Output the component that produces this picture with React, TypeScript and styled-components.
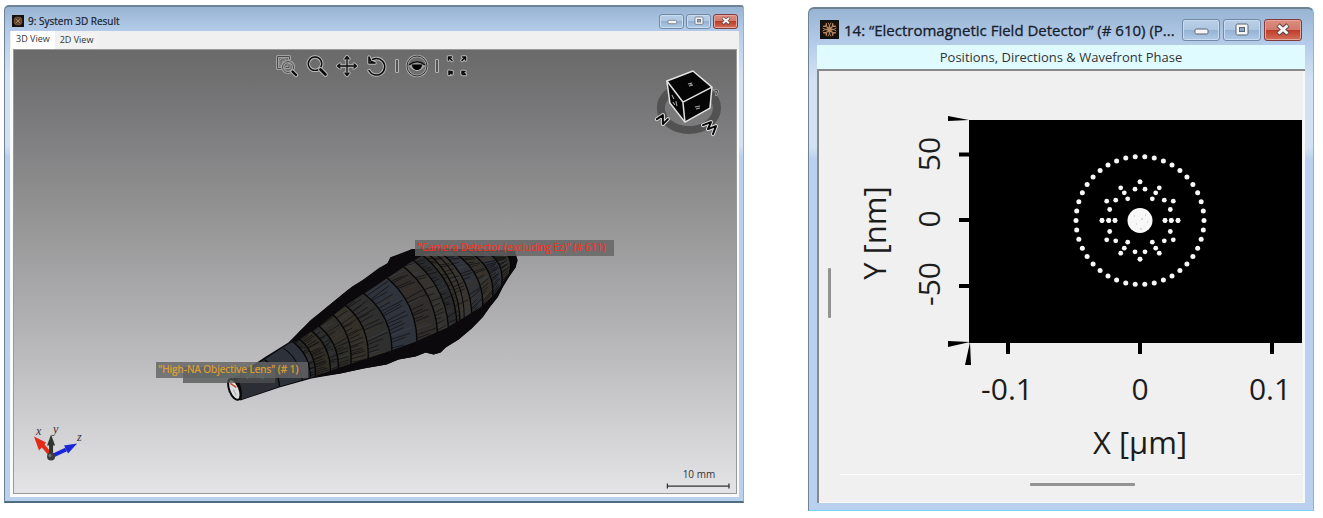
import React from 'react';
import styled, { createGlobalStyle } from 'styled-components';

const ui = '"Open Sans", "Noto Sans", sans-serif';

const GlobalStyle = createGlobalStyle`
  *, *::before, *::after { box-sizing: border-box; }
  body { margin: 0; background: #fff; font-family: ${ui}; color: #222; }
  svg { display: block; }
`;

const Desktop = styled.main`
  display: grid;
  grid-template-columns: minmax(0, 740fr) minmax(0, 506fr);
  column-gap: 64px;
  align-items: start;
  padding: 5px 9px 6px 4px;
`;

const Frame = styled.section<{ $large?: boolean }>`
  display: flex;
  flex-direction: column;
  margin-top: ${(p) => (p.$large ? 2 : 0)}px;
  padding: ${(p) => (p.$large ? '0 8px 7px' : '0 4px 4px 5px')};
  border: 1px solid #6f8296;
  border-top-width: 2px;
  border-right-color: #66c3e6;
  border-bottom: ${(p) => (p.$large ? '1px solid #7ed3f2' : '2px solid #4f6d80')};
  border-radius: ${(p) => (p.$large ? '6px 6px 0 0' : '5px 3px 0 0')};
  background: linear-gradient(#98b4d3 0, #b5cdea ${(p) => (p.$large ? 36 : 25)}px, #d3e2f3 70px, #d3e2f3 138px, #b9d1ee 150px);
`;

const TitleBar = styled.header<{ $large?: boolean }>`
  display: flex;
  align-items: center;
  gap: ${(p) => (p.$large ? 5 : 4)}px;
  height: ${(p) => (p.$large ? 36 : 24)}px;
  padding: ${(p) => (p.$large ? '5px 3px 0 3px' : '4px 1px 0 2px')};
`;

const Title = styled.h1<{ $large?: boolean }>`
  flex: 1;
  min-width: 0;
  margin: 0;
  overflow: hidden;
  white-space: nowrap;
  text-overflow: ellipsis;
  font-size: ${(p) => (p.$large ? 15 : 10)}px;
  line-height: ${(p) => (p.$large ? 24 : 16)}px;
  font-weight: 400;
  color: #15202c;
  -webkit-text-stroke: ${(p) => (p.$large ? '0.3px' : '0.2px')} #15202c;
`;

const Controls = styled.div<{ $large?: boolean }>`
  display: flex;
  gap: ${(p) => (p.$large ? 3 : 2)}px;
`;

const ControlButton = styled.button<{ $large?: boolean; $danger?: boolean }>`
  display: grid;
  place-items: center;
  width: ${(p) => (p.$large ? 38 : 25)}px;
  height: ${(p) => (p.$large ? 22 : 15)}px;
  padding: 0;
  border: 1px solid ${(p) => (p.$danger ? '#823a3a' : '#7189a6')};
  border-radius: 3px;
  box-shadow: inset 0 0 0 1px ${(p) => (p.$danger ? '#e2a79d' : '#c9dcf0')};
  background: ${(p) =>
    p.$danger
      ? 'linear-gradient(#dd8d7f 0, #d0796b 50%, #bd3b28 50%, #d4705a 100%)'
      : 'linear-gradient(#b9cee7 0, #aec6e0 50%, #94b1d2 50%, #b0cae6 100%)'};
`;

const Tabs = styled.div`
  display: flex;
  align-items: flex-end;
  height: 18px;
  padding-left: 1px;
  background: #f0f0f0;
`;

const Tab = styled.button<{ $active?: boolean }>`
  height: ${(p) => (p.$active ? 18 : 16)}px;
  padding: 0 5px 2px;
  border: 0;
  background: ${(p) => (p.$active ? '#fff' : '#f2f2f2')};
  color: #333;
  font: 9px/14px ${ui};
`;

const ViewBorder = styled.div`
  padding: 0 2px 3px 3px;
  background: #fafafa;
`;

const Viewport = styled.div`
  position: relative;
  border: 1px solid #9a9a9a;
  background: linear-gradient(#6a6a6a 0, #767577 12%, #929293 36%, #b3b2b4 63%, #cfced0 84%, #e4e3e6 100%);
`;

const ToolRow = styled.div`
  position: absolute;
  top: 4px;
  left: 0;
  right: 6px;
  display: flex;
  justify-content: center;
  gap: 6px;
`;

const ToolButton = styled.button`
  width: 24px;
  height: 24px;
  padding: 0;
  border: 0;
  background: none;
`;

const Separator = styled.span`
  width: 4px;
  height: 14px;
  margin-top: 5px;
  border: 1px solid #b5b5b5;
  border-radius: 1px;
  background: #555;
`;

const SceneLabel = styled.span<{ $x: number; $y: number; $w: number; $color: string; $dim?: boolean }>`
  position: absolute;
  left: ${(p) => p.$x}%;
  top: ${(p) => p.$y}%;
  width: ${(p) => p.$w}px;
  height: 16px;
  padding-left: ${(p) => (p.$dim ? 5 : 2)}px;
  white-space: nowrap;
  background: ${(p) => (p.$dim ? 'rgba(80,82,82,.75)' : 'rgba(100,100,100,.82)')};
  color: ${(p) => p.$color};
  font-size: ${(p) => (p.$dim ? 9 : 10)}px;
  line-height: 15px;
  -webkit-text-stroke: 0.2px ${(p) => p.$color};
`;

const Caption = styled.h2`
  height: 24px;
  margin: 0;
  background: #e0fbff;
  text-align: center;
  font-size: 13px;
  line-height: 24px;
  font-weight: 400;
  color: #333;
`;

const Panel = styled.div`
  display: grid;
  grid-template-columns: 21px minmax(0, 1fr);
  border: solid #888;
  border-width: 2px 0 0 2px;
  box-shadow: inset -2px -1px #f8f8f8;
  padding-right: 3px;
  background: #f0f0f0;
`;

const VerticalTrack = styled.div`
  display: flex;
  align-items: center;
  justify-content: center;
  grid-row: span 2;
  padding-top: 12px;
`;

const HorizontalTrack = styled.div`
  display: flex;
  justify-content: center;
  height: 29px;
  padding: 8px 0 0 22px;
  border-top: 1px solid #fff;
`;

const Thumb = styled.div<{ $vertical?: boolean }>`
  width: ${(p) => (p.$vertical ? 3 : 105)}px;
  height: ${(p) => (p.$vertical ? 50 : 3)}px;
  border-radius: 1px;
  background: #929292;
`;

function AppIcon({ size }: { size: number }) {
  return (
    <svg width={size} height={size} viewBox="0 0 18 18" aria-hidden="true">
      <rect width="18" height="18" fill="#14110f" />
      <g fill="none" stroke="#b9855a" strokeWidth="1.400">
        <path d="M9 5v8M5 9h8M6 6l6 6M12 6l-6 6" />
        <path d="M6 6V3M6 6H3M12 6V3M12 6h3M6 12v3M6 12H3M12 12v3M12 12h3" />
        <path d="M9 5L7.500 2.500M9 5l1.500-2.500M9 13l-1.500 2.500M9 13l1.500 2.500M5 9L2.500 7.500M5 9l-2.500 1.500M13 9l2.500-1.500M13 9l2.500 1.500" strokeWidth="0.900" />
      </g>
    </svg>
  );
}

function WindowControls({ large }: { large?: boolean }) {
  const size = large ? 18 : 12;
  return (
    <Controls $large={large}>
      <ControlButton type="button" $large={large} aria-label="Minimize">
        <svg width={size} height={size} viewBox="0 0 18 18">
          <rect x="3" y="8" width="13" height="5" rx="1.5" fill="#f4f4f4" stroke="#59646f" />
        </svg>
      </ControlButton>
      <ControlButton type="button" $large={large} aria-label="Maximize">
        <svg width={size} height={size} viewBox="0 0 18 18">
          <rect x="3" y="3" width="12" height="11" rx="1.5" fill="#f4f4f4" stroke="#59646f" />
          <rect x="6.5" y="6.5" width="5" height="4" fill="#8aa6c6" stroke="#59646f" />
        </svg>
      </ControlButton>
      <ControlButton type="button" $large={large} $danger aria-label="Close">
        <svg width={size} height={size} viewBox="0 0 18 18">
          <path d="M4 4l10 9M14 4L4 13" stroke="#5c4244" strokeWidth="5" />
          <path d="M4.5 4.5l9 8M13.5 4.5l-9 8" stroke="#f6f6f6" strokeWidth="3" />
        </svg>
      </ControlButton>
    </Controls>
  );
}

/* Each glyph is stroked twice: a pale halo first, then the dark line. */
function Haloed({ d, width = 1.4, soft }: { d: string; width?: number; soft?: boolean }) {
  return (
    <g fill="none" strokeLinecap="round" strokeLinejoin="round">
      <path d={d} stroke={soft ? '#a2a2a2' : '#b9b9b9'} strokeWidth={width + 2} />
      <path d={d} stroke={soft ? '#4c4c4c' : '#0a0a0a'} strokeWidth={width} />
    </g>
  );
}

const tools: { name: string; art: React.ReactNode }[] = [
  {
    name: 'Zoom to area',
    art: (
      <>
        <Haloed soft width={1} d="M7 14.500H2.500V2.500H14.500V5M6 11V6H10" />
        <Haloed soft width={1} d="M13 7.500a5.500 5.500 0 1 0 .1 0M11 13.500h3v-3" />
        <Haloed width={2.4} d="M17.500 17.500L21 21" />
      </>
    ),
  },
  {
    name: 'Zoom',
    art: (
      <>
        <Haloed d="M10 3a6.700 6.700 0 1 0 .1 0" />
        <Haloed width={2.6} d="M15.500 15.500L20.500 20.500" />
      </>
    ),
  },
  {
    name: 'Pan',
    art: <Haloed width={1.3} d="M12 3V21M3 12H21M10 5l2-2.500 2 2.500M10 19l2 2.500 2-2.500M5 10l-2.500 2 2.500 2M19 10l2.500 2-2.500 2" />,
  },
  {
    name: 'Rotate',
    art: (
      <>
        <Haloed width={1.5} d="M5 7.500a8.300 8.300 0 1 1-1 9" />
        <Haloed width={1.5} d="M4 3v6h6L6 7.500z" />
      </>
    ),
  },
  {
    name: 'View direction',
    art: (
      <>
        <circle cx="12" cy="12" r="10" fill="none" stroke="#a9a9a9" strokeWidth="2.600" />
        <circle cx="12" cy="12" r="10" fill="none" stroke="#333" strokeWidth="1" />
        <path d="M4 11.500q8-8 16 0q-8 10-16 0z" fill="#999" stroke="#bbb" />
        <path d="M4 11q8-6.500 16 0" fill="none" stroke="#111" strokeWidth="1.500" />
        <path d="M7 10.500h10a5 5.500 0 0 1-10 0z" fill="#000" />
      </>
    ),
  },
  {
    name: 'Fit to window',
    art: (
      <Haloed
        width={1.5}
        d="M3.500 6V3H6.500M3.500 3L7 6.500M17.500 3H20.500V6M20.500 3L17 6.500M4 17V20.500M7 17.500V20M4 20.500L7 17.500H4.500M17.500 20.500H20.500M17 20V17.500H20M17 17.500L20.500 20.500"
      />
    ),
  },
];

/* Cross-sections of the beam: [top x, top y, bottom x, bottom y, bulge]. */
const rings = [
  [237, 379, 241, 399, 4],
  [264, 359, 279, 386, 7],
  [292, 341, 310, 377, 9],
  [297, 337, 315, 376, 10],
  [308, 328, 330, 373, 12],
  [315, 323, 338, 371, 13],
  [329, 311, 350, 369, 15],
  [340, 301, 367, 366, 19],
  [356, 288, 391, 360, 22],
  [378, 271, 416, 354, 24],
  [396, 261, 437, 347, 24],
  [409, 257, 448, 341, 22],
  [421, 254, 456, 336, 21],
  [427, 253, 459, 333, 20],
  [440, 252, 471, 323, 18],
  [453, 252, 482, 310, 17],
  [469, 252, 492, 297, 14],
  [487, 252, 501, 284, 10],
  [504, 252, 509, 272, 6],
];

const bandColors = ['#2b2e35', '#2d3139', '#2b2b2b', '#312e28', '#2b2c2d', '#302e29', '#34302a', '#2f2f2f', '#2f333c', '#302d2a', '#353330', '#292a2c', '#323029', '#383530', '#303238', '#35322d', '#303238', '#302e2a'];

/* Point at fraction t down the curved edge of a cross-section. */
function ringPoint([tx, ty, bx, by, k]: number[], t: number) {
  const cx = (tx + bx) / 2 + k;
  const cy = (ty + by) / 2 - k / 2;
  const u = 1 - t;
  return [u * u * tx + 2 * u * t * cx + t * t * bx, u * u * ty + 2 * u * t * cy + t * t * by];
}

const ringCurve = ([tx, ty, bx, by, k]: number[]) => `Q${(tx + bx) / 2 + k} ${(ty + by) / 2 - k / 2} ${bx} ${by}`;
const ringBack = ([tx, ty, bx, by, k]: number[]) => `L${bx} ${by}Q${(tx + bx) / 2 + k} ${(ty + by) / 2 - k / 2} ${tx} ${ty}`;

function hash(n: number) {
  const v = Math.sin(n * 127.1) * 43758.5453;
  return v - Math.floor(v);
}

function Beam() {
  const rays: React.ReactNode[] = [];
  for (let i = 2; i < rings.length - 1; i++) {
    for (let j = 0; j < 24; j++) {
      const seed = i * 31 + j;
      const t = (j + hash(seed)) / 24;
      const [x1, y1] = ringPoint(rings[i], t);
      const [x2, y2] = ringPoint(rings[i + 1], Math.min(1, t + (hash(seed + 7) - 0.5) * 0.04));
      const f = 0.45 + hash(seed + 3) * 0.55;
      const color = hash(seed + 11) > 0.85 ? '#3a414e' : hash(seed + 5) > 0.78 ? '#3f372a' : '#0e0e10';
      rays.push(<path key={seed} d={`M${x1} ${y1}L${x1 + (x2 - x1) * f} ${y1 + (y2 - y1) * f}`} stroke={color} strokeWidth={0.7} />);
    }
  }
  return (
    <g fill="none">
      <path
        d="M230 380L264 357L288 342L299 331L310 320L325 308L347 290L352 286L362 280L378 268L387 263L390 257L402 254L411 249L430 248L514 250L517 260L515 267L508 277L502 287L497 297L489 307L482 317L471 328L458 339L445 347L440 352L433 354L425 352L415 356L398 359L386 364L363 368L340 373L311 378L279 387L240 400Z"
        fill="#0b090b"
      />
      {rings.slice(0, -1).map((r, i) => (
        <path key={i} d={`M${r[0]} ${r[1]}L${rings[i + 1][0]} ${rings[i + 1][1]}${ringCurve(rings[i + 1])}${ringBack(r)}Z`} fill={bandColors[i]} />
      ))}
      {rays}
      {rings.slice(1).map((r, i) => (
        <path key={i} d={`M${r[0]} ${r[1]}${ringCurve(r)}`} stroke="#060606" strokeWidth={1.3} />
      ))}
      <path d="M433 252Q468 278 463 330M283 348Q298 357 302 380" stroke="#080808" />
      <path
        d="M311 377L345 365L385 352L413 342L447 327L480 307L497 291L507 276L515 260L515 267L508 277L502 287L497 297L489 307L482 317L471 328L458 339L445 347L440 352L433 354L425 352L415 356L398 359L386 364L363 368L340 373Z"
        fill="#0b090b"
      />
      <path d="M290 342L299 331L325 308L347 290L362 280L387 263L390 257L411 249H432L407 264L385 279L347 304L317 327L296 341Z" fill="#0b090b" />
      <ellipse cx="234" cy="389" rx="5" ry="11" transform="rotate(-22 234 389)" fill="#ddd" stroke="#090909" strokeWidth="2" />
      <path d="M230 383l6 4" stroke="#c44536" strokeWidth="1.500" />
      <path d="M233 389l3 6" stroke="#aaa" />
    </g>
  );
}

function OrientationCube() {
  return (
    <g strokeLinejoin="round">
      <ellipse cx="688" cy="108" rx="28" ry="22" fill="none" stroke="#525252" strokeWidth="8" />
      <path d="M666 81L692 71L711 87L709 108L684 122L669 103Z" fill="#050505" stroke="#e2e2e2" strokeWidth="1.500" />
      <path d="M666 81L682 102L711 87M682 102L684 122" fill="none" stroke="#e2e2e2" strokeWidth="1.500" />
      <path d="M687 84l4-1M688 86l4-1M690 83v3M694 107l5-1M695 109l4-1M671 95l2 4M675 101l1 5M672 102l2 3" fill="none" stroke="#aaa" strokeWidth="1" />
      <g fill="none" strokeLinecap="round">
        <path d="M656 119l6-4 0 9 5-5M702 125l8-3-3 7 8-3-3 8" stroke="#ddd" strokeWidth="4" />
        <path d="M656 119l6-4 0 9 5-5M702 125l8-3-3 7 8-3-3 8" stroke="#080808" strokeWidth="2" />
        <path d="M713 90l4 1-2 4" stroke="#bbb" strokeWidth="2" />
        <path d="M713 90l4 1-2 4" stroke="#444" strokeWidth="1" />
      </g>
    </g>
  );
}

const AxisName = styled.text`
  font: italic 12px "Liberation Serif", serif;
  fill: #333;
`;

function Scene() {
  return (
    <svg viewBox="14 50 721 442" width="100%" role="img" aria-label="3D system view">
      <OrientationCube />
      <Beam />
      <g>
        <path d="M51 455L42 444" stroke="#e32a17" strokeWidth="4" />
        <path d="M34 436L46 442L39 450Z" fill="#e32a17" />
        <path d="M51 455V443" stroke="#2c382f" strokeWidth="4" />
        <path d="M51 434L55 445H47Z" fill="#2c382f" />
        <path d="M51 456L66 449" stroke="#1a25d8" strokeWidth="4" />
        <path d="M77 443L64 445L68 453Z" fill="#1a25d8" />
        <circle cx="51" cy="456" r="4" fill="#3b3b3b" />
        <circle cx="50" cy="455" r="1.500" fill="#777" />
        <AxisName x="36" y="434">x</AxisName>
        <AxisName x="53" y="432">y</AxisName>
        <AxisName x="77" y="440">z</AxisName>
      </g>
      <path d="M666 485.500H728M666.500 483v5M728 483v5" stroke="#333" strokeWidth="1.300" />
      <text x="698" y="477" textAnchor="middle" fontSize="10" fill="#333">10 mm</text>
    </svg>
  );
}

const spotPairs = [
  [0, 38.700], [5, 31.300], [19.300, 32.700], [15.700, 27.700], [12.300, 21.700], [33.300, 19.300], [24.300, 20.300], [30.300, 11],
  [38, 0], [31.300, 0], [25, 0],
];

const ChartText = styled.text`
  font-family: ${ui};
  font-size: 31px;
  fill: #1c1c1c;
  text-anchor: middle;
`;

const TickText = styled(ChartText)`
  font-size: 30px;
`;

function SpotChart() {
  const cx = 1140;
  const cy = 220.5;
  const ring = Array.from({ length: 42 }, (_, i) => (i * 2 * Math.PI) / 42);
  return (
    <svg viewBox="840 71 462 403" width="100%" role="img" aria-label="Spot diagram, Y in nm over X in µm">
      <rect x="969" y="120" width="333" height="223" />
      <path d="M969 120L948 116V121ZM970 342L948 341V347ZM970 342L965 365H971Z" />
      <path d="M959 154.500h10M959 220h10M959 286h10M1008 343v11M1140 343v11M1272 343v11" stroke="#000" strokeWidth="4" />
      <g fill="#f8f8f8">
        {ring.map((a) => (
          <circle key={a} cx={cx + 64 * Math.cos(a)} cy={cy + 64 * Math.sin(a)} r="2.500" />
        ))}
        {spotPairs.flatMap(([x, y]) =>
          [[1, 1], [1, -1], [-1, 1], [-1, -1]].map(([sx, sy]) => (
            <circle key={`${x},${y},${sx},${sy}`} cx={cx + sx * x} cy={cy + sy * y} r="2.400" />
          )),
        )}
        <circle cx={cx} cy={cy} r="12.500" />
      </g>
      <path d="M1141 219h2M1145 215h1M1136 224h1M1147 222h1M1134 216h1M1140 229h2" stroke="#bbb" />
      <TickText x="1007" y="400">-0.1</TickText>
      <TickText x="1140" y="400">0</TickText>
      <TickText x="1270" y="400">0.1</TickText>
      <ChartText x="1140" y="454">X [μm]</ChartText>
      <TickText transform="translate(940 154) rotate(-90)">50</TickText>
      <TickText transform="translate(940 219) rotate(-90)">0</TickText>
      <TickText transform="translate(940 284) rotate(-90)">-50</TickText>
      <ChartText transform="translate(886 233) rotate(-90)">Y [nm]</ChartText>
    </svg>
  );
}

export default function App() {
  return (
    <>
      <GlobalStyle />
      <Desktop>
        <Frame>
          <TitleBar>
            <AppIcon size={12} />
            <Title>9: System 3D Result</Title>
            <WindowControls />
          </TitleBar>
          <Tabs role="tablist">
            <Tab type="button" role="tab" aria-selected="true" $active>3D View</Tab>
            <Tab type="button" role="tab" aria-selected="false">2D View</Tab>
          </Tabs>
          <ViewBorder>
            <Viewport>
              <Scene />
              <ToolRow>
                {tools.map((tool, i) => (
                  <React.Fragment key={tool.name}>
                    {i >= 4 && <Separator />}
                    <ToolButton type="button" aria-label={tool.name}>
                      <svg width="24" height="24" viewBox="0 0 24 24">{tool.art}</svg>
                    </ToolButton>
                  </React.Fragment>
                ))}
              </ToolRow>
              <SceneLabel $x={23.4} $y={71.6} $w={92} $color="#3f8a70" $dim>"Plane Wave" (# 0)</SceneLabel>
              <SceneLabel $x={19.7} $y={70.4} $w={152} $color="#e0a32c">"High-NA Objective Lens" (# 1)</SceneLabel>
              <SceneLabel $x={55.6} $y={43} $w={199} $color="#ee3524">"Camera Detector (excluding Ez)" (# 611)</SceneLabel>
            </Viewport>
          </ViewBorder>
        </Frame>
        <Frame $large>
          <TitleBar $large>
            <AppIcon size={19} />
            <Title $large>14: “Electromagnetic Field Detector” (# 610) (P...</Title>
            <WindowControls large />
          </TitleBar>
          <Caption>Positions, Directions &amp; Wavefront Phase</Caption>
          <Panel>
            <VerticalTrack>
              <Thumb $vertical />
            </VerticalTrack>
            <SpotChart />
            <HorizontalTrack>
              <Thumb />
            </HorizontalTrack>
          </Panel>
        </Frame>
      </Desktop>
    </>
  );
}
